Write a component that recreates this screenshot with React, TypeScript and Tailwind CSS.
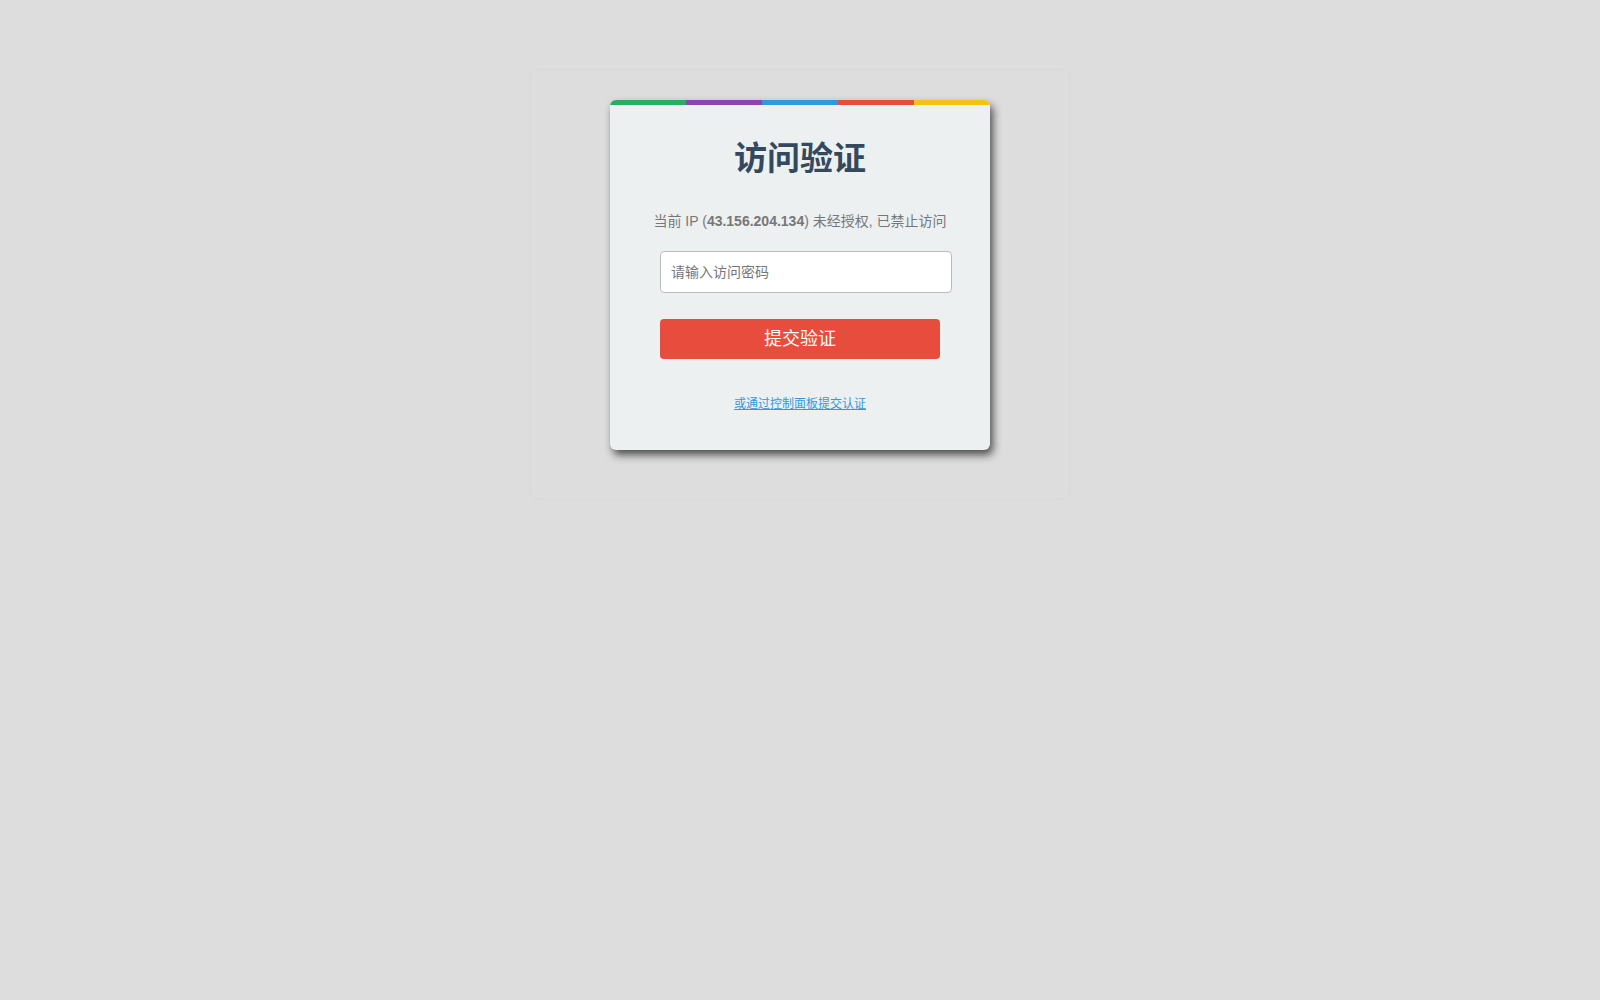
export default function App() {
  const colors = ['bg-[#27ae60]', 'bg-[#8e44ad]', 'bg-[#3498db]', 'bg-[#e74c3c]', 'bg-[#f1c40f]'];
  return (
    <div className="min-h-screen bg-[#dddddd] pt-[69px] font-['Liberation_Sans','Noto_Sans_CJK_SC',sans-serif]">
      <div className="mx-auto w-[540px] rounded-[8px] border border-[#d9d9d9] pt-[30px] pb-[49px]">
        <div className="mx-auto w-[380px] overflow-hidden rounded-[6px] bg-[#ecf0f1] shadow-[3px_5px_8px_rgba(0,0,0,0.65)]">
          <div className="flex h-[5px]">
            {colors.map((c) => (
              <div key={c} className={`flex-1 ${c}`} />
            ))}
          </div>
          <div className="px-[50px] pt-[35px] pb-[38px]">
            <h1 className="text-center text-[33px] leading-[38px] font-bold text-[#34495e]">访问验证</h1>
            <p className="mt-[33px] text-center text-[14px] leading-[20px] text-[#777777] whitespace-nowrap -mx-[20px]">
              当前 IP (<b>43.156.204.134</b>) 未经授权, 已禁止访问
            </p>
            <input
              type="password"
              placeholder="请输入访问密码"
              className="mt-[20px] block h-[42px] w-[292px] rounded-[4px] border border-[#bbbbbb] bg-white px-[10px] text-[14px] text-[#333] placeholder:text-[#777777] outline-none"
            />
            <button className="mt-[26px] block h-[40px] w-[280px] rounded-[4px] bg-[#e74c3c] text-[18px] text-white">
              提交验证
            </button>
            <div className="mt-[37px] text-center text-[12px] leading-[16px]">
              <a href="#" className="text-[#3498db] underline">或通过控制面板提交认证</a>
            </div>
          </div>
        </div>
      </div>
    </div>
  );
}
